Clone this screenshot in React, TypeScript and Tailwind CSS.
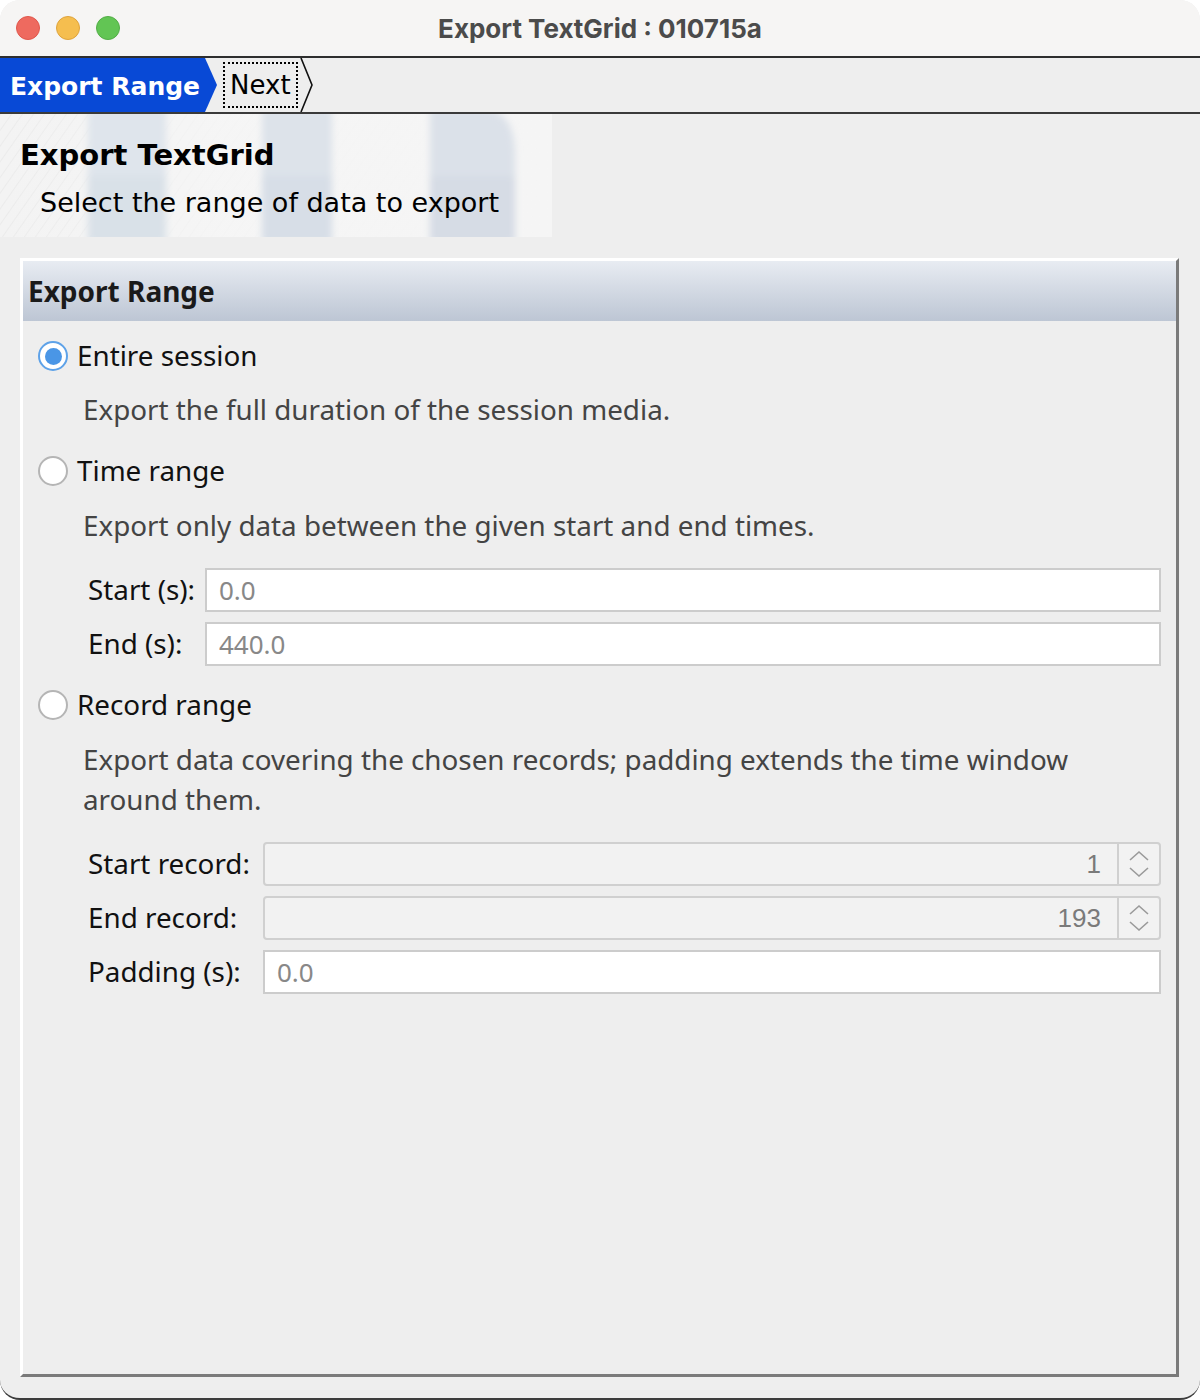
import React from "react";

const uiFont = { fontFamily: '"Noto Sans", "DejaVu Sans", sans-serif' };
const lucida = { fontFamily: '"DejaVu Sans", "Noto Sans", sans-serif' };
const macFont = { fontFamily: 'Inter, "Liberation Sans", sans-serif' };
const fieldFont = { fontFamily: '"Liberation Sans", Arial, sans-serif' };

const Radio = ({ checked }: { checked?: boolean }) =>
  checked ? (
    <span className="flex h-[30px] w-[30px] shrink-0 items-center justify-center rounded-full border-2 border-[#5ea2e8] bg-white">
      <span className="h-[17px] w-[17px] rounded-full bg-[#4a96e6]" />
    </span>
  ) : (
    <span className="h-[30px] w-[30px] shrink-0 rounded-full border-2 border-[#b5b5b5] bg-white" />
  );

const RadioRow = ({ label, checked, className }: { label: string; checked?: boolean; className?: string }) => (
  <div className={`flex h-[40px] items-center gap-[9px] ${className || ""}`}>
    <Radio checked={checked} />
    <span className="text-[27.8px] text-[#111]" style={uiFont}>
      {label}
    </span>
  </div>
);

const Description = ({ children, className }: { children: React.ReactNode; className?: string }) => (
  <p className={`pl-[45px] pr-[60px] text-[27.8px] leading-[40px] text-[#444] ${className || ""}`} style={uiFont}>
    {children}
  </p>
);

const FieldLabel = ({ children }: { children: React.ReactNode }) => (
  <span className="flex h-[44px] items-center text-[27.8px] text-[#111]" style={uiFont}>
    {children}
  </span>
);

const TextField = ({ value }: { value: string }) => (
  <div className="flex h-[44px] items-center border-2 border-[#cccccc] bg-white px-[12px] text-[26px] text-[#888]" style={uiFont}>
    {value}
  </div>
);

const Spinner = ({ value }: { value: string }) => (
  <div className="flex h-[44px] rounded-[4px] border-2 border-[#d0d0d0] bg-[#f2f2f2]">
    <div className="flex flex-1 items-center justify-end pr-[16px] text-[26px] text-[#7a7a7a]" style={fieldFont}>
      {value}
    </div>
    <div className="flex w-[42px] items-center justify-center border-l-2 border-[#d0d0d0]">
      <svg width="20" height="28" viewBox="0 0 20 28" fill="none" stroke="#9a9a9a" strokeWidth="1.6">
        <path d="M1 10 L10 2 L19 10" />
        <path d="M1 18 L10 26 L19 18" />
      </svg>
    </div>
  </div>
);

const Watermark = () => (
  <svg className="absolute left-0 top-0" width="552" height="123" viewBox="0 0 552 123">
    <defs>
      <pattern id="stripes" width="9" height="9" patternUnits="userSpaceOnUse" patternTransform="rotate(35)">
        <rect width="9" height="9" fill="#f3f3f3" />
        <line x1="0" y1="0" x2="0" y2="9" stroke="#e4e4e4" strokeWidth="1" />
      </pattern>
      <linearGradient id="fade" x1="0" x2="1" y1="0" y2="0">
        <stop offset="0" stopColor="#f6f6f6" stopOpacity="0" />
        <stop offset="0.4" stopColor="#f6f6f6" stopOpacity="0.8" />
        <stop offset="1" stopColor="#f5f5f5" stopOpacity="1" />
      </linearGradient>
      <filter id="soft">
        <feGaussianBlur stdDeviation="3.5" />
      </filter>
    </defs>
    <rect width="552" height="123" fill="url(#stripes)" />
    <rect width="552" height="123" fill="url(#fade)" />
    <g filter="url(#soft)">
      <rect x="88" y="-6" width="78" height="135" fill="#dfe5ec" />
      <rect x="262" y="-6" width="70" height="135" fill="#dde3ea" />
      <path d="M430 -6 H478 Q515 -6 515 40 V129 H430 Z" fill="#dbe1e9" />
      <rect x="88" y="62" width="78" height="67" fill="#d6dde6" opacity="0.6" />
      <rect x="262" y="62" width="70" height="67" fill="#d4dbe5" opacity="0.6" />
      <rect x="430" y="62" width="85" height="67" fill="#d2d9e3" opacity="0.6" />
    </g>
  </svg>
);

export default function App() {
  return (
    <div className="h-[1400px] w-[1200px] bg-white">
      <div className="flex h-[1400px] flex-col overflow-hidden rounded-[20px] border-b-2 border-[#3c3c3c] bg-[#eeeeee]">
        {/* title bar */}
        <div className="relative flex h-[58px] shrink-0 items-center justify-center border-b-2 border-[#2e2e2e] bg-[#f6f5f4]">
          <div className="absolute left-[16px] top-[16px] flex gap-[16px]">
            <span className="h-[24px] w-[24px] rounded-full border border-[#e0574c] bg-[#ee6a5f]" />
            <span className="h-[24px] w-[24px] rounded-full border border-[#dea33c] bg-[#f5be4f]" />
            <span className="h-[24px] w-[24px] rounded-full border border-[#53ad47] bg-[#62c554]" />
          </div>
          <span className="text-[26px] font-bold text-[#4b4b4b]" style={macFont}>
            Export TextGrid : 010715a
          </span>
        </div>

        {/* breadcrumb */}
        <div className="flex h-[56px] shrink-0 items-stretch border-b-2 border-[#3a3a3a] bg-[#eeeeee]">
          <div
            className="flex w-[217px] items-center bg-[#0849d6] pl-[10px] pt-[3px] text-[25px] font-bold text-white [clip-path:polygon(0_0,205px_0,217px_50%,205px_100%,0_100%)]"
            style={lucida}
          >
            Export Range
          </div>
          <div className="flex items-center pl-[6px]">
            <span className="flex h-[46px] items-center border-2 border-dotted border-black px-[5px] text-[26px] text-black" style={lucida}>
              Next
            </span>
          </div>
          <svg width="20" height="54" viewBox="0 0 20 54" fill="none" stroke="#111" strokeWidth="1.6">
            <path d="M3 0 L14 27 L3 54" />
          </svg>
        </div>

        {/* header */}
        <div className="relative h-[123px] shrink-0">
          <Watermark />
          <div className="relative pl-[20px] pt-[21px]">
            <h1 className="text-[29px] font-bold leading-[40px] text-black" style={lucida}>
              Export TextGrid
            </h1>
            <p className="pl-[20px] pt-[8px] text-[27px] leading-[40px] text-black" style={lucida}>
              Select the range of data to export
            </p>
          </div>
        </div>

        {/* body */}
        <div className="flex flex-1 flex-col pb-[21px] pl-[20px] pr-[21px] pt-[21px]">
          <div className="flex flex-1 flex-col border-b-[3px] border-l-[3px] border-r-[3px] border-t-[3px] border-b-[#7a7a7a] border-l-white border-r-[#7a7a7a] border-t-white">
            <div className="flex h-[60px] items-center bg-gradient-to-b from-[#e8ecf2] to-[#bdc6d4] pl-[5px]">
              <span className="text-[28px] font-bold text-[#1a1a1a]" style={uiFont}>
                Export Range
              </span>
            </div>

            <div className="flex flex-col pl-[15px] pr-[15px] pt-[15px]">
              <RadioRow label="Entire session" checked />
              <Description className="mt-[13px]">Export the full duration of the session media.</Description>

              <RadioRow label="Time range" className="mt-[22px]" />
              <Description className="mt-[14px]">Export only data between the given start and end times.</Description>

              <div className="mt-[23px] grid grid-cols-[117px_1fr] gap-y-[10px] pl-[50px]">
                <FieldLabel>Start (s):</FieldLabel>
                <TextField value="0.0" />
                <FieldLabel>End (s):</FieldLabel>
                <TextField value="440.0" />
              </div>

              <RadioRow label="Record range" className="mt-[19px]" />
              <Description className="mt-[14px]">
                Export data covering the chosen records; padding extends the time window around them.
              </Description>

              <div className="mt-[23px] grid grid-cols-[175px_1fr] gap-y-[10px] pl-[50px]">
                <FieldLabel>Start record:</FieldLabel>
                <Spinner value="1" />
                <FieldLabel>End record:</FieldLabel>
                <Spinner value="193" />
                <FieldLabel>Padding (s):</FieldLabel>
                <TextField value="0.0" />
              </div>
            </div>
          </div>
        </div>
      </div>
    </div>
  );
}
